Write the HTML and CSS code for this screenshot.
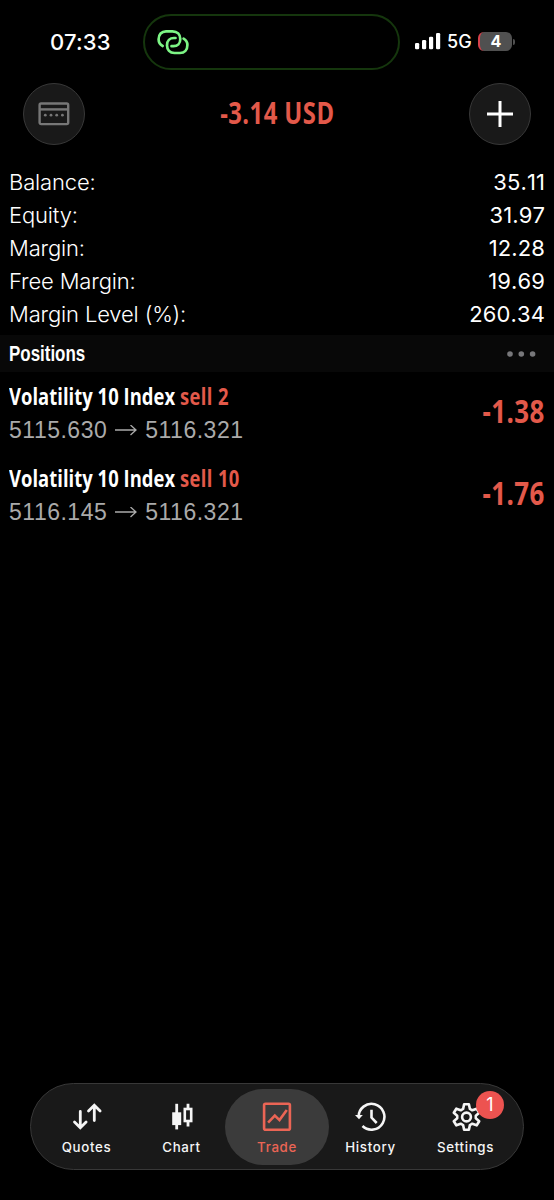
FILE: index.html
```html
<!DOCTYPE html>
<html lang="en">
<head>
    <meta charset="UTF-8">
    <meta name="viewport" content="width=device-width, initial-scale=1.0">
    <title>Trade</title>
    <link rel="stylesheet" href="styles.css">
</head>
<body>
    <div class="screen">
        <div class="status-bar">
            <span class="time">07:33</span>
            <div class="island">
                <svg width="34" height="28" viewBox="0 0 34 28" fill="none" stroke="#7df585" stroke-width="2.7" stroke-linecap="round">
                    <path d="M6.7 18C4.3 16.8 2.6 14.5 2.6 11.3C2.6 6.5 5.5 3.3 10 3.3H16.5C21.3 3.3 24.3 6.5 24.3 11C24.3 15.3 21.5 18.2 17.5 18.2H15.5"/>
                    <path d="M27.6 10.6C29.8 11.8 31.4 14.2 31.4 17C31.4 21.8 28.5 25 24 25H18.5C13.8 25 11 21.8 11 17.3C11 13 13.8 10 18 10H19.5"/>
                </svg>
            </div>
            <div class="signal">
                <svg width="26" height="17" viewBox="0 0 26 17" fill="#fff">
                    <rect x="0" y="10" width="4.2" height="6.2" rx="1.3"/>
                    <rect x="7" y="7" width="4.2" height="9.2" rx="1.3"/>
                    <rect x="14" y="3.7" width="4.2" height="12.5" rx="1.3"/>
                    <rect x="21" y="0" width="4.2" height="16.2" rx="1.3"/>
                </svg>
                <span class="network">5G</span>
                <span class="battery">4</span>
                <span class="battery-tip"></span>
            </div>
        </div>

        <div class="header">
            <div class="round-button">
                <svg width="32" height="24" viewBox="0 0 32 24" fill="none" stroke="#777" stroke-width="2.4">
                    <rect x="1.6" y="1.5" width="28.6" height="20.6" rx="1.5"/>
                    <path d="M1.6 7.4H30.2"/>
                    <g fill="#777" stroke="none">
                        <circle cx="7.3" cy="13.2" r="1.4"/>
                        <circle cx="13" cy="13.2" r="1.4"/>
                        <circle cx="18.7" cy="13.2" r="1.4"/>
                        <circle cx="24.4" cy="13.2" r="1.4"/>
                    </g>
                </svg>
            </div>
            <h1 class="profit">-3.14 USD</h1>
            <div class="round-button">
                <svg width="26" height="26" viewBox="0 0 26 26" stroke="#fff" stroke-width="3">
                    <path d="M13 0V26M0 13H26"/>
                </svg>
            </div>
        </div>

        <div class="account">
            <div class="account-row"><span>Balance:</span><span class="number">35.11</span></div>
            <div class="account-row"><span>Equity:</span><span class="number">31.97</span></div>
            <div class="account-row"><span>Margin:</span><span class="number">12.28</span></div>
            <div class="account-row"><span>Free Margin:</span><span class="number">19.69</span></div>
            <div class="account-row"><span>Margin Level (%):</span><span class="number">260.34</span></div>
        </div>

        <div class="section-title">
            <span class="section-name">Positions</span>
            <svg width="30" height="6" viewBox="0 0 30 6" fill="#77777a">
                <circle cx="3" cy="3" r="2.8"/>
                <circle cx="14.3" cy="3" r="2.8"/>
                <circle cx="25.6" cy="3" r="2.8"/>
            </svg>
        </div>

        <div class="position">
            <div class="position-info">
                <div class="symbol">Volatility 10 Index <span class="sell">sell 2</span></div>
                <div class="prices">
                    <span>5115.630</span>
                    <svg width="22" height="12" viewBox="0 0 22 12" fill="none" stroke="#aaa" stroke-width="1.3"><path d="M0 5H21M15.5 0L21 5L15.5 10"/></svg>
                    <span>5116.321</span>
                </div>
            </div>
            <div class="loss">-1.38</div>
        </div>
        <div class="position">
            <div class="position-info">
                <div class="symbol">Volatility 10 Index <span class="sell">sell 10</span></div>
                <div class="prices">
                    <span>5116.145</span>
                    <svg width="22" height="12" viewBox="0 0 22 12" fill="none" stroke="#aaa" stroke-width="1.3"><path d="M0 5H21M15.5 0L21 5L15.5 10"/></svg>
                    <span>5116.321</span>
                </div>
            </div>
            <div class="loss">-1.76</div>
        </div>

        <div class="tab-bar">
            <div class="tab">
                <svg width="32" height="32" viewBox="0 0 32 32" fill="none" stroke="#f5f5f5" stroke-width="2.8" stroke-linecap="round">
                    <path d="M9.3 10.5V26.5M3.5 21L9.3 26.8L15.1 21"/>
                    <path d="M23.3 19.5V4.5M17.5 10L23.3 4.2L29.1 10"/>
                </svg>
                <span>Quotes</span>
            </div>
            <div class="tab">
                <svg width="32" height="32" viewBox="0 0 32 32" fill="none" stroke="#f5f5f5" stroke-width="2.8">
                    <path d="M10.7 2.8V28.4"/>
                    <rect x="7.6" y="12.7" width="6.2" height="10" fill="#f5f5f5"/>
                    <path d="M22 2.8V7.5M22 20.5V25.5"/>
                    <rect x="18.8" y="8" width="6.4" height="12" stroke-width="2.6"/>
                </svg>
                <span>Chart</span>
            </div>
            <div class="tab active">
                <svg width="32" height="32" viewBox="0 0 32 32" fill="none" stroke="currentColor" stroke-width="2.6">
                    <rect x="3.1" y="2.7" width="25.8" height="26" rx="1.5"/>
                    <path d="M7.1 21.6L13.8 14.5L18.5 19.1L25.8 8.9"/>
                </svg>
                <span>Trade</span>
            </div>
            <div class="tab">
                <svg width="32" height="32" viewBox="0 0 32 32" fill="none" stroke="#f5f5f5" stroke-width="2.6">
                    <path d="M3.6 15.9A12.9 12.9 0 1 1 7.5 25"/>
                    <path d="M16.5 8.7V16.6L21.7 22"/>
                    <path d="M0 13.9H7.8L4 18.3Z" fill="#f5f5f5" stroke="none"/>
                </svg>
                <span>History</span>
            </div>
            <div class="tab">
                <svg width="32" height="32" viewBox="0 0 32 32" fill="none" stroke="#f5f5f5" stroke-width="2.6" stroke-linejoin="round">
                    <path d="M14.1 3.2H18.9L19.9 7.9L22.3 9.3L26.7 7.7L29.2 11.8L25.8 14.7V17.3L29.2 20.2L26.7 24.3L22.3 22.7L19.9 24.1L18.9 28.8H14.1L13.1 24.1L10.7 22.7L6.3 24.3L3.8 20.2L7.2 17.3V14.7L3.8 11.8L6.3 7.7L10.7 9.3L13.1 7.9Z"/>
                    <circle cx="16.5" cy="16" r="4.4"/>
                </svg>
                <span>Settings</span>
                <span class="badge">1</span>
            </div>
        </div>
    </div>
</body>
</html>
```
FILE: styles.css
```css
* {
    box-sizing: border-box;
}
body {
    margin: 0;
    background-color: #000;
    color: #fff;
    font-family: Inter, "Liberation Sans", sans-serif;
}
svg {
    display: block;
    flex-shrink: 0;
}
.screen {
    display: flex;
    flex-direction: column;
    height: 1200px;
    padding-bottom: 30px;
}
.status-bar {
    display: flex;
    align-items: center;
    height: 83px;
}
.time {
    width: 143px;
    padding-left: 50px;
    font-size: 22px;
    font-weight: 550;
    letter-spacing: .2px;
}
.island {
    display: flex;
    align-items: center;
    width: 257px;
    height: 56px;
    padding-left: 11px;
    border: 2px solid #15360d;
    border-radius: 28px;
}
.signal {
    display: flex;
    align-items: center;
    padding-left: 15px;
}
.network {
    width: 33px;
    padding-left: 6px;
    font-size: 18px;
    font-weight: 450;
}
.battery {
    width: 34px;
    height: 19px;
    margin-left: 4px;
    border-left: 2px solid #d8414b;
    border-radius: 6px;
    background-color: #505050;
    font-size: 16px;
    font-weight: 700;
    line-height: 19px;
    text-align: center;
}
.battery-tip {
    width: 2px;
    height: 6px;
    margin-left: 1px;
    border-radius: 0 2px 2px 0;
    background-color: #505050;
}
.header {
    display: flex;
    align-items: center;
    justify-content: space-between;
    height: 62px;
    padding: 0 23px;
}
.round-button {
    display: flex;
    align-items: center;
    justify-content: center;
    width: 62px;
    height: 62px;
    border: 1px solid #383838;
    border-radius: 50%;
    background-color: #191919;
}
.profit {
    margin: 0;
    padding-bottom: 4px;
    color: #e3594a;
    font-family: "Open Sans", sans-serif;
    font-size: 30.5px;
    font-weight: 700;
    letter-spacing: .6px;
    white-space: nowrap;
    transform: scaleX(.78);
}
.account {
    padding: 21px 9px 4px;
}
.account-row {
    display: flex;
    justify-content: space-between;
    height: 33px;
    font-size: 22px;
    font-weight: 350;
    letter-spacing: -.15px;
    line-height: 33px;
}
.number {
    font-weight: 400;
    font-kerning: none;
    letter-spacing: .1px;
}
.section-title {
    display: flex;
    align-items: center;
    justify-content: space-between;
    height: 37px;
    padding: 0 17px 0 9px;
    background-color: #080808;
}
.section-name {
    font-family: "Liberation Sans", sans-serif;
    font-size: 22px;
    font-weight: 700;
    transform: scaleX(.77);
    transform-origin: left;
}
.position {
    display: flex;
    align-items: center;
    justify-content: space-between;
    height: 82px;
    padding: 0 9px;
}
.symbol {
    font-family: "Open Sans", sans-serif;
    font-size: 23px;
    font-weight: 700;
    letter-spacing: .05px;
    line-height: 33px;
    white-space: nowrap;
    transform: scaleX(.8);
    transform-origin: left;
}
.sell {
    color: #e3594a;
    letter-spacing: .5px;
}
.prices {
    display: flex;
    align-items: center;
    gap: 8px;
    height: 33px;
    padding-top: 2px;
    color: #aaa;
    font-family: "Liberation Sans", sans-serif;
    font-size: 23px;
    letter-spacing: .5px;
    line-height: 33px;
}
.loss {
    padding-bottom: 5px;
    color: #e3594a;
    font-family: "Open Sans", sans-serif;
    font-size: 32px;
    font-weight: 700;
    letter-spacing: .5px;
    transform: scaleX(.81);
    transform-origin: right;
}
.tab-bar {
    display: flex;
    align-items: center;
    height: 87px;
    margin: auto 30px 0;
    padding: 0 10px 0 8px;
    border: 1px solid #383838;
    border-radius: 44px;
    background-color: #191919;
}
.tab {
    position: relative;
    display: flex;
    flex: 1;
    flex-direction: column;
    align-items: center;
    height: 76px;
    padding-top: 12px;
    border-radius: 38px;
    color: #f5f5f5;
    font-size: 13.3px;
    font-weight: 500;
    letter-spacing: .65px;
    line-height: 28px;
}
.tab.active {
    flex: 0 0 104px;
    margin: 0 -6px 0 -4px;
    background-color: #3b3b3b;
    color: #eb6555;
}
.badge {
    position: absolute;
    top: 2px;
    right: 9px;
    width: 28px;
    height: 28px;
    border-radius: 50%;
    background-color: #ed5350;
    color: #fff;
    font-size: 18px;
    font-weight: 400;
    letter-spacing: 0;
    text-align: center;
}
```
